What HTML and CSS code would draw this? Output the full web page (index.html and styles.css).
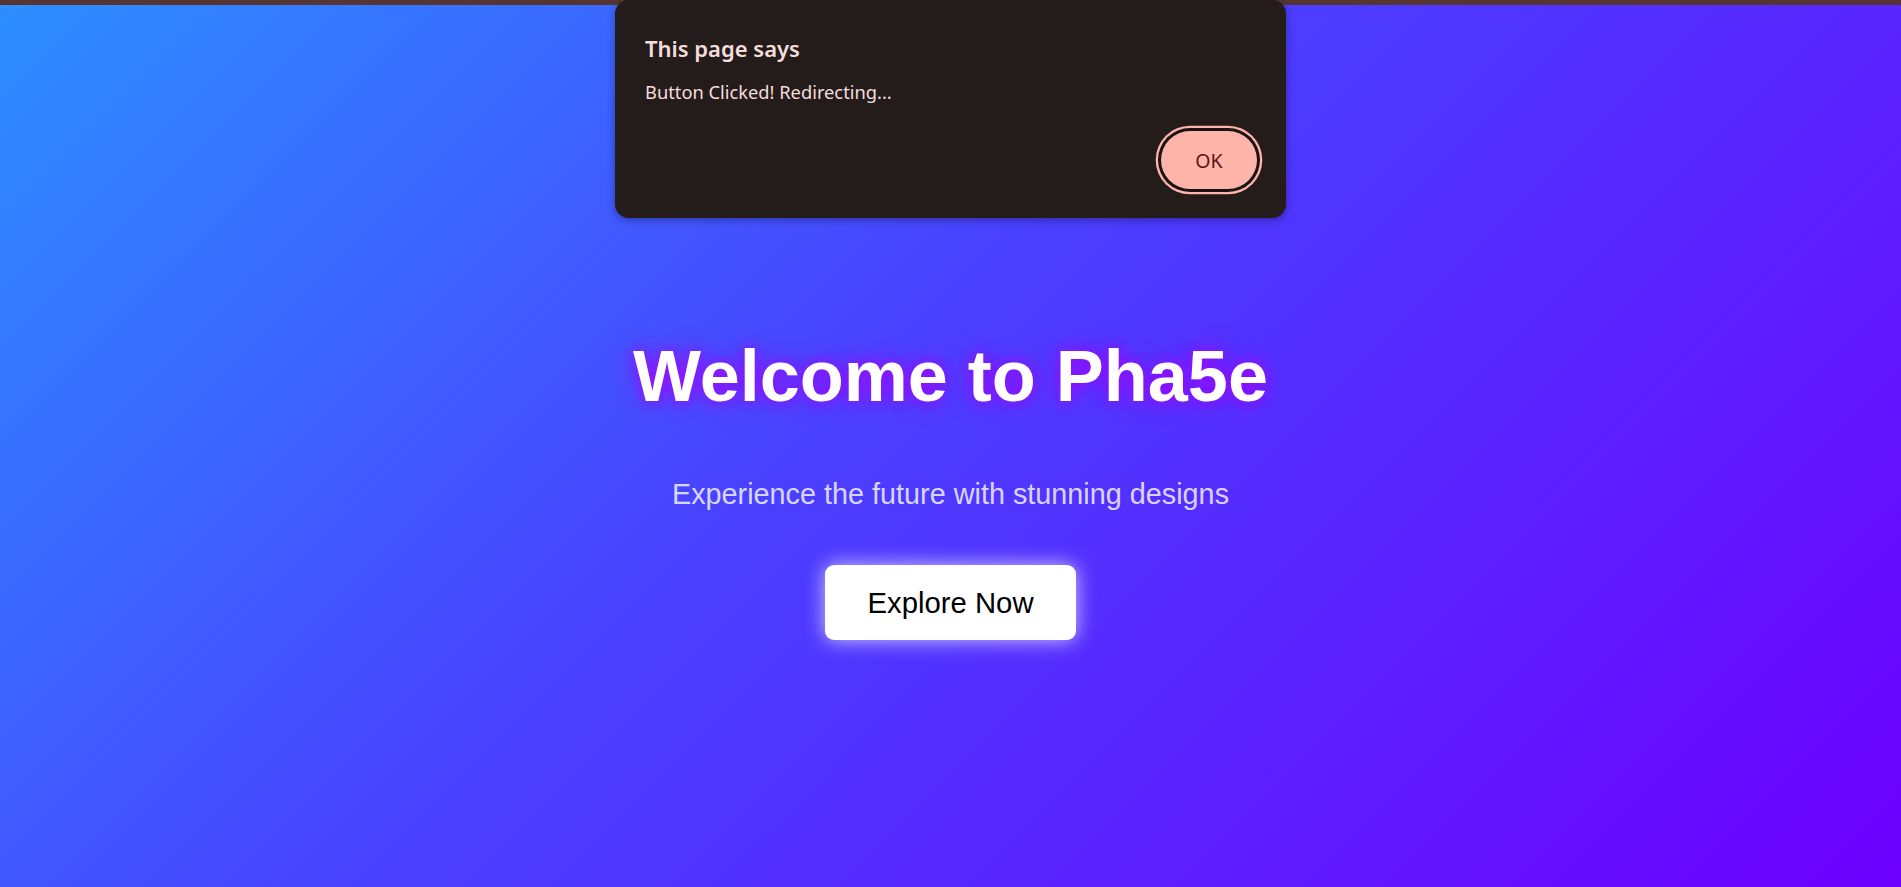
FILE: index.html
```html
<!DOCTYPE html>
<html lang="en">
<head>
<meta charset="utf-8">
<title>Pha5e</title>
<link rel="stylesheet" href="styles.css">
</head>
<body>
<div class="topbar"></div>
<main class="hero">
  <h1 class="hero-title">Welcome to Pha5e</h1>
  <p class="hero-sub">Experience the future with stunning designs</p>
  <button class="hero-btn" type="button">Explore Now</button>
</main>
<div class="dialog" role="alertdialog">
  <div class="dialog-title">This page says</div>
  <div class="dialog-msg">Button Clicked! Redirecting...</div>
  <div class="dialog-actions">
    <button class="dialog-ok" type="button">OK</button>
  </div>
</div>
</body>
</html>
```

FILE: styles.css
```css
html, body {
  margin: 0;
  padding: 0;
  height: 100%;
}
body {
  font-family: "Liberation Sans", Arial, sans-serif;
  overflow: hidden;
  display: flex;
  flex-direction: column;
  background: #2d8eff;
}
.topbar {
  height: 5px;
  background: #563432;
  flex: none;
}
.hero {
  flex: 1;
  display: flex;
  flex-direction: column;
  align-items: center;
  padding-top: 330px;
  background: linear-gradient(135deg, #2d8eff 0%, #4a40ff 45%, #6c00ff 100%);
}
.hero-title {
  margin: 0;
  font-size: 72px;
  font-weight: bold;
  color: #ffffff;
  line-height: normal;
  text-shadow: 0 0 10px rgba(165, 0, 255, 0.6), 0 0 22px rgba(170, 0, 255, 0.9);
}
.hero-sub {
  margin: 61px 0 0;
  font-size: 28.8px;
  line-height: normal;
  color: rgba(255, 255, 255, 0.8);
}
.hero-btn {
  margin-top: 54px;
  font-family: "Liberation Sans", Arial, sans-serif;
  font-size: 29.3px;
  padding: 20.5px 42px;
  border: none;
  border-radius: 9px;
  background: #ffffff;
  color: #000000;
  box-shadow: 0 0 20px rgba(255, 255, 255, 0.75);
  line-height: normal;
}
.dialog {
  position: absolute;
  top: 0;
  left: 615px;
  width: 671px;
  height: 218px;
  box-sizing: border-box;
  padding: 33px 30px 0 30px;
  background: #241b1b;
  border-radius: 14px;
  box-shadow: 0 2px 8px rgba(0, 0, 0, 0.35);
  font-family: "Noto Sans", "Open Sans", sans-serif;
  color: #f3dedb;
  display: flex;
  flex-direction: column;
}
.dialog-title {
  font-size: 22px;
  font-weight: 600;
  line-height: 30px;
}
.dialog-msg {
  font-size: 18.3px;
  line-height: 24px;
  margin-top: 17px;
}
.dialog-actions {
  display: flex;
  justify-content: flex-end;
  margin-top: 27px;
}
.dialog-ok {
  width: 96px;
  height: 58px;
  border: none;
  border-radius: 29px;
  background: #ffb4a9;
  color: #5c1311;
  font-family: "Noto Sans", "Open Sans", sans-serif;
  font-size: 19.5px;
  box-shadow: 0 0 0 3px #1a1313, 0 0 0 5.3px #ffb4a9;
  margin-right: -1px;
}
```
